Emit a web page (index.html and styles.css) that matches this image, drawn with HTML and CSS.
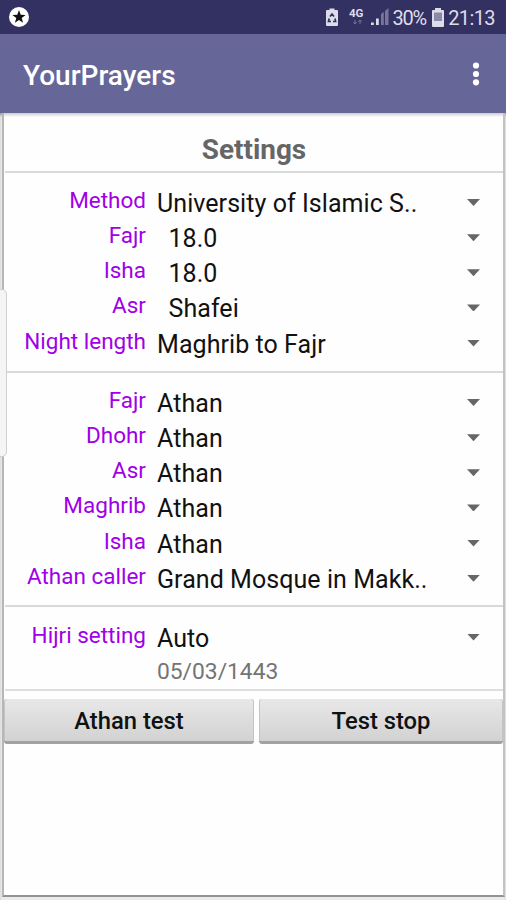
FILE: index.html
```html
<!DOCTYPE html>
<html lang="en">
<head>
<meta charset="utf-8">
<meta name="viewport" content="width=device-width">
<title>YourPrayers</title>
<link rel="stylesheet" href="styles.css">
</head>
<body>
<header>
  <div class="status">
    <svg class="star" width="22" height="22" viewBox="0 0 22 22"><circle cx="11" cy="11" r="10" fill="#fff"/><path d="M11 4l1.7 4.8 4.9.1-3.9 3 1.4 4.900-4.100-2.900-4.100 2.900 1.400-4.900-3.900-3 4.900-.1z" fill="#111"/></svg>
    <svg class="tray" width="68" height="34" viewBox="0 0 68 34">
      <path d="M0 11q0-1 1-1h2.500V8.500h5V10H11q1 0 1 1v14q0 1-1 1H1q-1 0-1-1z" fill="#dddde9"/>
      <path d="M4 16.500l2-2.500 2 2.500M9 18.500l.6 3H7M5 21.500H2.500l.7-3" fill="none" stroke="#333060" stroke-width="1.700"/>
      <path d="M29 20v4m-1.600-1.600L29 24l1.600-1.600M34 24v-4m-1.600 1.600L34 20l1.600 1.600" fill="none" stroke="#77759a" stroke-width="1"/>
      <path d="M45 22.500h2.800V25H45zM50 18.500h2.800V25H50z" fill="#dddde9"/>
      <path d="M55 14l2.800-2v13H55zM59 11l3.500-3v17H59z" fill="#77759c"/>
    </svg>
    <span class="net">4G</span>
    <span class="percent">30%</span>
    <svg class="battery" width="12" height="19" viewBox="0 0 12 19"><path d="M0 3q0-1 1-1h2V0h6v2h2q1 0 1 1v15q0 1-1 1H1q-1 0-1-1z" fill="#dddde9"/><path d="M2 4.500h8V13H2z" fill="#8b89a8"/></svg>
    <span class="clock">21:13</span>
  </div>
  <div class="appbar">
    <h1>YourPrayers</h1>
    <svg width="8" height="24" viewBox="0 0 8 24"><g fill="#fff"><circle cx="4" cy="3.500" r="3.100"/><circle cx="4" cy="12" r="3.100"/><circle cx="4" cy="20.300" r="3.100"/></g></svg>
  </div>
</header>
<main>
  <div class="card">
    <h2>Settings</h2>
    <section>
      <div class="row"><label>Method</label><span class="value">University of Islamic S..</span><i></i></div>
      <div class="row"><label>Fajr</label><span class="value inset">18.0</span><i></i></div>
      <div class="row"><label>Isha</label><span class="value inset">18.0</span><i></i></div>
      <div class="row"><label>Asr</label><span class="value inset">Shafei</span><i></i></div>
      <div class="row"><label>Night length</label><span class="value">Maghrib to Fajr</span><i></i></div>
    </section>
    <section class="athan">
      <div class="row"><label>Fajr</label><span class="value">Athan</span><i></i></div>
      <div class="row"><label>Dhohr</label><span class="value">Athan</span><i></i></div>
      <div class="row"><label>Asr</label><span class="value">Athan</span><i></i></div>
      <div class="row"><label>Maghrib</label><span class="value">Athan</span><i></i></div>
      <div class="row"><label>Isha</label><span class="value">Athan</span><i></i></div>
      <div class="row"><label>Athan caller</label><span class="value">Grand Mosque in Makk..</span><i></i></div>
    </section>
    <section class="hijri">
      <div class="row"><label>Hijri setting</label><span class="value">Auto</span><i></i></div>
      <div class="date">05/03/1443</div>
    </section>
    <div class="buttons"><button>Athan test</button><button>Test stop</button></div>
  </div>
  <div class="edge"></div>
</main>
</body>
</html>
```
FILE: styles.css
```css
* { box-sizing: border-box; }
body {
  margin: 0;
  width: 506px;
  height: 900px;
  overflow: hidden;
  display: flex;
  flex-direction: column;
  background: #ebebeb;
  font-family: Roboto, "Liberation Sans", sans-serif;
}
header { color: #fff; }
.status {
  height: 34px;
  background: #333062;
  display: flex;
  align-items: center;
  padding: 0 11px 0 8px;
  font-size: 20px;
  color: #dddde9;
  position: relative;
}
.star { margin-right: 295.5px; flex: none; }
.tray { flex: none; }
.net { position: absolute; left: 349px; top: 7px; font-size: 11.5px; line-height: 13px; font-weight: 700; }
.percent { letter-spacing: -1.3px; width: 38px; white-space: nowrap; padding-top: 2px; margin-left: -1px; margin-right: 1px; }
.battery { flex: none; margin-top: 1px; }
.clock { margin-left: auto; padding-top: 2px; letter-spacing: -0.6px; }
.appbar {
  height: 79px;
  background: #666698;
  display: flex;
  align-items: center;
  justify-content: space-between;
  padding: 0 26px 0 23px;
}
h1 { margin: 4px 0 0; font-size: 28px; line-height: 34px; font-weight: 500; }
main { flex: 1; position: relative; padding: 0 2px 4px; box-shadow: inset 0 3px 3px -1px #999; }
.card {
  height: 784px;
  border: 2px solid #b6b6b4;
  border-right-color: #c4c4be;
  border-top: 0;
  border-bottom-color: #929292;
  background: linear-gradient(#ccc, #fefefe 4px);
  padding-left: 1px;
  margin-right: -1px;
}
h2 {
  margin: 0;
  height: 58px;
  padding-top: 20px;
  font-size: 27.9px;
  line-height: 34px;
  font-weight: 700;
  color: #666;
  text-align: center;
}
section { border-top: 2px solid #d9d9d9; height: 200px; padding-top: 13px; }
.athan { height: 234px; }
.hijri { height: 86px; border-bottom: 2px solid #dedede; padding-top: 13.6px; }
.row { height: 35.15px; line-height: 35.15px; display: flex; }
label { width: 141px; text-align: right; font-size: 22.5px; color: #a000e8; margin-top: -3px; }
.value { flex: 1; margin-left: 11px; font-size: 25px; letter-spacing: 0.06px; color: #111; white-space: nowrap; }
.inset { padding-left: 11.5px; }
.row i { width: 13px; height: 7px; margin: 13px 23px 0 0; background: #666; clip-path: polygon(0 0, 100% 0, 50% 100%); }
.date { margin: 0 0 0 152px; font-size: 22.8px; line-height: 32px; color: #747474; }
.buttons { display: flex; gap: 5px; margin-top: 8px; margin-left: -1px; }
button {
  height: 45px;
  width: 250px;
  border: 0;
  border-bottom: 3px solid #a2a2a2;
  border-radius: 3px;
  background: linear-gradient(#e8e8e8, #d2d2d2);
  box-shadow: inset 1px 0 #c4c4c4, inset -1px 0 #c4c4c4;
  font: 500 23.8px/42px Roboto, "Liberation Sans", sans-serif;
  color: #111;
  padding: 1px 0 0;
}
button + button { width: 244px; }
.edge {
  position: absolute;
  left: -4px;
  top: 176px;
  width: 11px;
  height: 168px;
  border: 1px solid #d0d0d0;
  border-radius: 5px;
  background: #f5f5f5;
}
```
